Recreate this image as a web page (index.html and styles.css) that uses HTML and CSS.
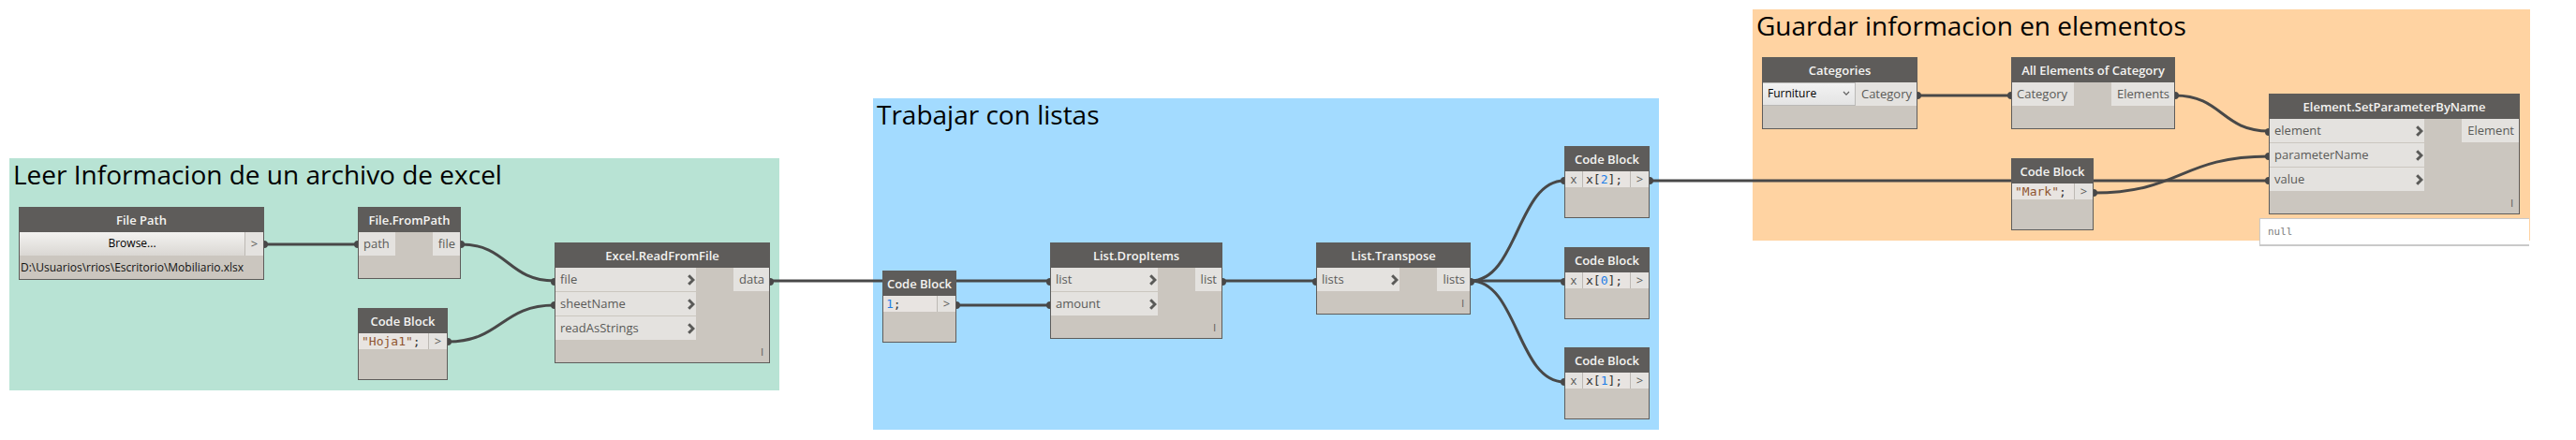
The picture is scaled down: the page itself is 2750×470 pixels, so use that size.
FILE: index.html
```html
<!DOCTYPE html>
<html lang="es">
<head>
<meta charset="utf-8">
<title>Excel a elementos</title>
<link rel="stylesheet" href="styles.css">
</head>
<body>
<svg class="symbols" aria-hidden="true">
  <symbol id="chevron" viewBox="0 0 8 12"><path d="M1.2 1.2 L6 6 L1.2 10.8" fill="none" stroke="currentColor" stroke-width="3"/></symbol>
</svg>
<main class="canvas">
  <svg class="wires" aria-hidden="true">
    <g class="wire-lines">
      <path d="M282 261H382"/>
      <path d="M492 261C542 261 542 300 592 300"/>
      <path d="M478 365C535 365 535 326 592 326"/>
      <path d="M822 300H1121"/>
      <path d="M1021 326H1121"/>
      <path d="M1305 300H1405"/>
      <path d="M1570 300H1670"/>
      <path d="M1570 300C1620 300 1620 193 1670 193"/>
      <path d="M1570 300C1620 300 1620 408 1670 408"/>
      <path d="M1761 193H2422"/>
      <path d="M2047 102H2147"/>
      <path d="M2322 102C2372 102 2372 140 2422 140"/>
      <path d="M2235 206C2328 206 2328 167 2422 167"/>
    </g>
    <g class="wire-ends">
      <circle cx="282" cy="261" r="4"/><circle cx="382" cy="261" r="4"/>
      <circle cx="492" cy="261" r="4"/><circle cx="592" cy="301" r="4"/>
      <circle cx="478" cy="365" r="4"/><circle cx="592" cy="326" r="4"/>
      <circle cx="822" cy="301" r="4"/><circle cx="1121" cy="301" r="4"/>
      <circle cx="1021" cy="326" r="4"/><circle cx="1121" cy="326" r="4"/>
      <circle cx="1305" cy="301" r="4"/><circle cx="1405" cy="301" r="4"/>
      <circle cx="1570" cy="301" r="4"/><circle cx="1670" cy="301" r="4"/>
      <circle cx="1670" cy="193" r="4"/><circle cx="1670" cy="408" r="4"/>
      <circle cx="1761" cy="193" r="4"/><circle cx="2422" cy="193" r="4"/>
      <circle cx="2047" cy="102" r="4"/><circle cx="2147" cy="102" r="4"/>
      <circle cx="2322" cy="102" r="4"/><circle cx="2422" cy="141" r="4"/>
      <circle cx="2235" cy="206" r="4"/><circle cx="2422" cy="167" r="4"/>
    </g>
  </svg>

  <section class="group group-read">
    <h2 class="group-title">Leer Informacion de un archivo de excel</h2>
    <article class="node file-path">
      <h3 class="node-title">File Path</h3>
      <div class="file-row"><button class="browse" type="button">Browse...</button><span class="port code-out">&gt;</span></div>
      <p class="path">D:\Usuarios\rrios\Escritorio\Mobiliario.xlsx</p>
    </article>
    <article class="node from-path">
      <h3 class="node-title">File.FromPath</h3>
      <div class="ports"><div class="inputs"><span class="port">path</span></div><span class="port">file</span></div>
    </article>
    <article class="node sheet-code">
      <h3 class="node-title">Code Block</h3>
      <div class="code-row"><code class="code"><span class="string">"Hoja1"</span>;</code><span class="port code-out">&gt;</span></div>
    </article>
    <article class="node read-file">
      <h3 class="node-title">Excel.ReadFromFile</h3>
      <div class="ports">
        <div class="inputs">
          <span class="port">file<svg class="chevron"><use href="#chevron"/></svg></span>
          <span class="port">sheetName<svg class="chevron"><use href="#chevron"/></svg></span>
          <span class="port">readAsStrings<svg class="chevron"><use href="#chevron"/></svg></span>
        </div>
        <span class="port">data</span>
      </div>
      <span class="lacing">l</span>
    </article>
  </section>

  <section class="group group-lists">
    <h2 class="group-title">Trabajar con listas</h2>
    <article class="node one-code">
      <h3 class="node-title">Code Block</h3>
      <div class="code-row"><code class="code"><span class="number">1</span>;</code><span class="port code-out">&gt;</span></div>
    </article>
    <article class="node drop-items">
      <h3 class="node-title">List.DropItems</h3>
      <div class="ports">
        <div class="inputs">
          <span class="port">list<svg class="chevron"><use href="#chevron"/></svg></span>
          <span class="port">amount<svg class="chevron"><use href="#chevron"/></svg></span>
        </div>
        <span class="port">list</span>
      </div>
      <span class="lacing">l</span>
    </article>
    <article class="node transpose">
      <h3 class="node-title">List.Transpose</h3>
      <div class="ports">
        <div class="inputs"><span class="port">lists<svg class="chevron"><use href="#chevron"/></svg></span></div>
        <span class="port">lists</span>
      </div>
      <span class="lacing">l</span>
    </article>
    <article class="node index-code index-two">
      <h3 class="node-title">Code Block</h3>
      <div class="code-row"><span class="port code-in">x</span><code class="code">x[<span class="number">2</span>];</code><span class="port code-out">&gt;</span></div>
    </article>
    <article class="node index-code index-zero">
      <h3 class="node-title">Code Block</h3>
      <div class="code-row"><span class="port code-in">x</span><code class="code">x[<span class="number">0</span>];</code><span class="port code-out">&gt;</span></div>
    </article>
    <article class="node index-code index-one">
      <h3 class="node-title">Code Block</h3>
      <div class="code-row"><span class="port code-in">x</span><code class="code">x[<span class="number">1</span>];</code><span class="port code-out">&gt;</span></div>
    </article>
  </section>

  <section class="group group-save">
    <h2 class="group-title">Guardar informacion en elementos</h2>
    <article class="node categories">
      <h3 class="node-title">Categories</h3>
      <div class="file-row">
        <div class="picker">
          <select class="picker-select" aria-label="Categories"><option>Furniture</option></select>
          <svg class="picker-arrow" viewBox="0 0 8 6" aria-hidden="true"><path d="M1 1 L4 4.2 L7 1" fill="none" stroke="currentColor" stroke-width="1.2"/></svg>
        </div>
        <span class="port">Category</span>
      </div>
    </article>
    <article class="node all-elements">
      <h3 class="node-title">All Elements of Category</h3>
      <div class="ports"><div class="inputs"><span class="port">Category</span></div><span class="port">Elements</span></div>
    </article>
    <article class="node mark-code">
      <h3 class="node-title">Code Block</h3>
      <div class="code-row"><code class="code"><span class="string">"Mark"</span>;</code><span class="port code-out">&gt;</span></div>
    </article>
    <article class="node set-parameter">
      <h3 class="node-title">Element.SetParameterByName</h3>
      <div class="ports">
        <div class="inputs">
          <span class="port">element<svg class="chevron"><use href="#chevron"/></svg></span>
          <span class="port">parameterName<svg class="chevron"><use href="#chevron"/></svg></span>
          <span class="port">value<svg class="chevron"><use href="#chevron"/></svg></span>
        </div>
        <span class="port">Element</span>
      </div>
      <span class="lacing">l</span>
    </article>
    <output class="preview">null</output>
  </section>
</main>
</body>
</html>
```
FILE: styles.css
```css
* { box-sizing: border-box; }

body {
  margin: 0;
  background: #fff;
  color: #000;
  font-family: "Open Sans", "Noto Sans", sans-serif;
  font-size: 13px;
}

h2, h3, p { margin: 0; }

.symbols { position: absolute; width: 0; height: 0; }

.canvas { position: relative; min-height: 100vh; overflow: hidden; }

/* Wires run above the groups and below the nodes */
.wires {
  position: absolute;
  inset: 0;
  z-index: 1;
  width: 100%;
  height: 100%;
  overflow: visible;
}
.wire-lines { fill: none; stroke: #484848; stroke-width: 3; }
.wire-ends { fill: #484848; }

/* Groups */
.group { position: absolute; }
.group-read { left: 10px; top: 169px; width: 822px; height: 248px; background: #b8e3d4; }
.group-lists { left: 932px; top: 105px; width: 839px; height: 354px; background: #a3dbff; }
.group-save { left: 1871px; top: 10px; width: 830px; height: 247px; background: #ffd3a2; }
.group-title {
  padding: 0 4px;
  font-size: 28px;
  font-weight: 400;
  line-height: 34px;
  white-space: nowrap;
}

/* Nodes */
.node {
  position: absolute;
  z-index: 2;
  min-height: 77px;
  padding-bottom: 24px;
  border: 1px solid #5e5c5a;
  background: #cbc6bf;
  color: #5a5a58;
}
.node-title {
  height: 26px;
  background: #5e5c5a;
  color: #f4f3f1;
  font-size: 13px;
  font-weight: 600;
  line-height: 26px;
  text-align: center;
  white-space: nowrap;
}

.file-path { left: 10px; top: 52px; width: 262px; padding-bottom: 0; }
.from-path { left: 372px; top: 52px; width: 110px; }
.sheet-code { left: 372px; top: 160px; width: 96px; }
.read-file { left: 582px; top: 90px; width: 230px; }

.one-code { left: 10px; top: 184px; width: 79px; }
.drop-items { left: 189px; top: 154px; width: 184px; }
.transpose { left: 473px; top: 154px; width: 165px; }
.index-code { left: 738px; width: 91px; }
.index-two { top: 51px; }
.index-zero { top: 159px; }
.index-one { top: 266px; }

.categories { left: 10px; top: 51px; width: 166px; }
.all-elements { left: 276px; top: 51px; width: 175px; }
.mark-code { left: 276px; top: 159px; width: 88px; }
.set-parameter { left: 551px; top: 90px; width: 268px; }

/* Ports */
.ports { display: flex; align-items: flex-start; gap: 40px; }
.inputs { display: flex; flex: 1; flex-direction: column; gap: 1px; }
.port {
  display: flex;
  align-items: center;
  justify-content: space-between;
  height: 25px;
  padding: 0 5px;
  background: #e4e2df;
  line-height: 25px;
  white-space: nowrap;
}
.ports > .port, .file-row > .port { padding-left: 6px; }
.inputs .port { padding-right: 1px; }
.chevron { width: 8px; height: 12px; }
.lacing {
  position: absolute;
  right: 6px;
  bottom: 4px;
  font-size: 11px;
  line-height: 14px;
}

/* File path and category pickers */
.file-row { display: flex; height: 25px; }
.browse {
  flex: 1;
  padding: 0 0 2px;
  border: 0;
  background: linear-gradient(#f3f2f0, #dad7d3);
  color: #000;
  font: 12px "Open Sans", "Noto Sans", sans-serif;
}
.path { padding-left: 1px; color: #111; font-size: 12px; line-height: 25px; white-space: nowrap; }
.picker { position: relative; flex: 1; }
.picker-select {
  width: 100%;
  height: 25px;
  padding: 0 5px 2px;
  border: 1px solid #bab9b7;
  border-left: 0;
  border-radius: 0;
  background: linear-gradient(#f2f2f2, #e4e4e4);
  color: #000;
  font: 12px "Open Sans", "Noto Sans", sans-serif;
  appearance: none;
}
.picker-arrow { position: absolute; top: 9px; right: 6px; width: 8px; height: 6px; color: #606060; }

/* Code blocks */
.code-row { display: flex; height: 17px; }
.code {
  flex: 1;
  padding-left: 3px;
  background: #e8e4e1;
  color: #333;
  font: 13px/17px "DejaVu Sans Mono", monospace;
  white-space: nowrap;
}
.string { color: #8f5530; }
.number { color: #1f7fe6; }
.code-in, .code-out { justify-content: center; }
.code-row .port { width: 19px; height: 17px; padding: 0; line-height: 17px; }
.code-row .code-out, .file-row .code-out { width: 20px; padding: 0; border-left: 1px solid #bdb9b4; }
.code-row .code-in { border-right: 1px solid #bdb9b4; }

/* Result bubble over the node it belongs to */
.preview {
  position: absolute;
  z-index: 2;
  left: 541px;
  top: 223px;
  width: 288px;
  padding-left: 8px;
  border: solid #c9c9c9;
  border-width: 1px 0 2px 1px;
  background: #fff;
  color: #808080;
  font: 11px/27px "DejaVu Sans Mono", monospace;
}
```
